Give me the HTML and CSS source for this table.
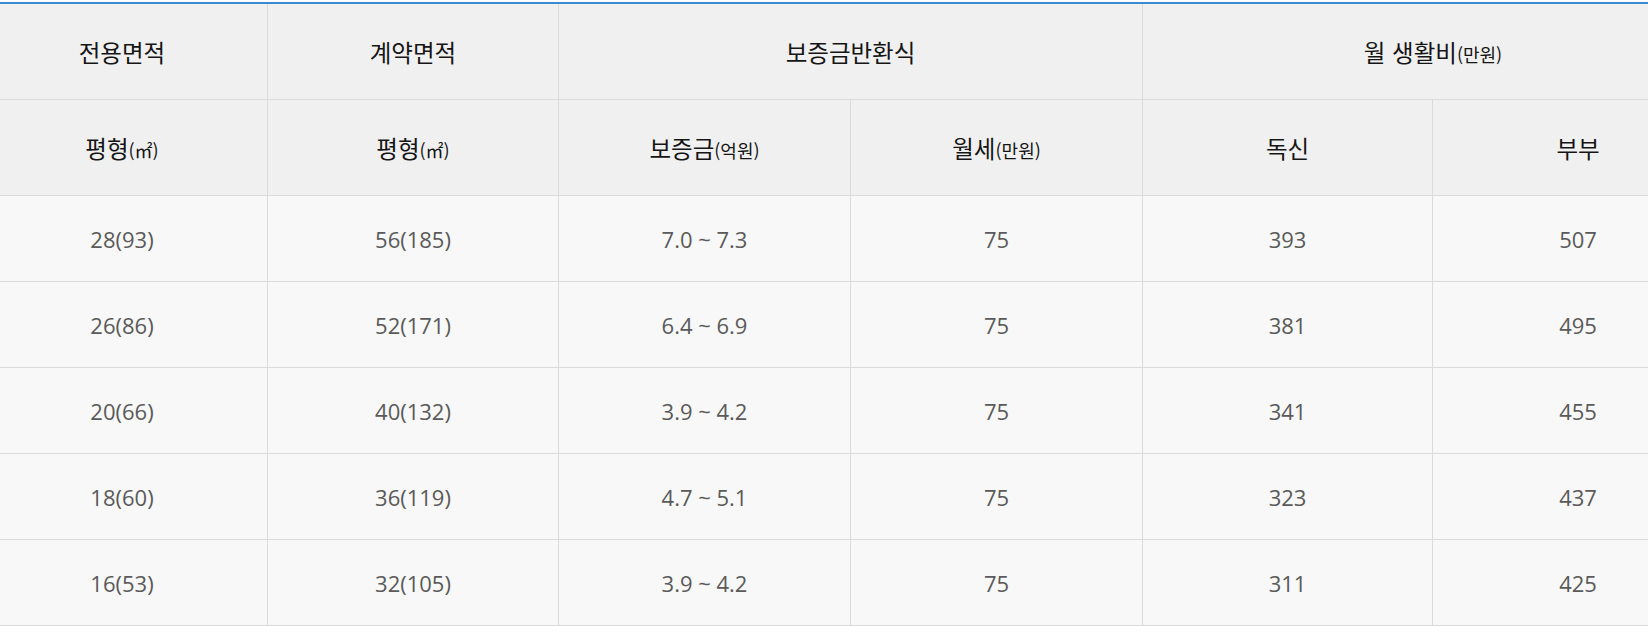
FILE: index.html
```html
<!DOCTYPE html>
<html lang="ko">
<head>
<meta charset="utf-8">
<title>평형별 정보</title>
<link rel="stylesheet" href="styles.css">
</head>
<body>
<div class="wrap">
  <table class="price-table">
    <colgroup>
      <col class="c1"><col class="c2"><col class="c3"><col class="c4"><col class="c5"><col class="c6">
    </colgroup>
    <thead>
      <tr class="hrow">
        <th>전용면적</th>
        <th>계약면적</th>
        <th colspan="2">보증금반환식</th>
        <th colspan="2">월 생활비<span class="unit">(만원)</span></th>
      </tr>
      <tr class="hrow">
        <th>평형<span class="unit">(㎡)</span></th>
        <th>평형<span class="unit">(㎡)</span></th>
        <th>보증금<span class="unit">(억원)</span></th>
        <th>월세<span class="unit">(만원)</span></th>
        <th>독신</th>
        <th>부부</th>
      </tr>
    </thead>
    <tbody>
      <tr><td>28(93)</td><td>56(185)</td><td>7.0 ~ 7.3</td><td>75</td><td>393</td><td>507</td></tr>
      <tr><td>26(86)</td><td>52(171)</td><td>6.4 ~ 6.9</td><td>75</td><td>381</td><td>495</td></tr>
      <tr><td>20(66)</td><td>40(132)</td><td>3.9 ~ 4.2</td><td>75</td><td>341</td><td>455</td></tr>
      <tr><td>18(60)</td><td>36(119)</td><td>4.7 ~ 5.1</td><td>75</td><td>323</td><td>437</td></tr>
      <tr><td>16(53)</td><td>32(105)</td><td>3.9 ~ 4.2</td><td>75</td><td>311</td><td>425</td></tr>
    </tbody>
  </table>
</div>
</body>
</html>
```

FILE: styles.css
```css
html, body {
  margin: 0;
  padding: 0;
  background: #ffffff;
}

.wrap {
  width: 1648px;
  overflow: hidden;
  padding-top: 2px;
}

.price-table {
  margin-left: -23px;
  width: 1747px;
  table-layout: fixed;
  border-collapse: separate;
  border-spacing: 0;
  border-top: 2px solid #3b8bd3;
}

.c1 { width: 291px; }
.c2 { width: 291px; }
.c3 { width: 292px; }
.c4 { width: 292px; }
.c5 { width: 290px; }
.c6 { width: 291px; }

.price-table th,
.price-table td {
  padding: 0;
  text-align: center;
  vertical-align: middle;
  border-right: 1px solid #dadada;
  border-bottom: 1px solid #dadada;
}

.price-table th {
  background: #f0f0f0;
  color: #151515;
  font-family: "Noto Sans CJK KR", "Noto Sans", sans-serif;
  font-size: 23.5px;
  font-weight: 400;
}

.hrow {
  height: 96px;
}

.unit {
  font-size: 18px;
}

.price-table td {
  background: #f8f8f8;
  color: #5a5a5a;
  font-family: "Open Sans", "Noto Sans", sans-serif;
  font-size: 22px;
  font-weight: 400;
  height: 85px;
}
```
